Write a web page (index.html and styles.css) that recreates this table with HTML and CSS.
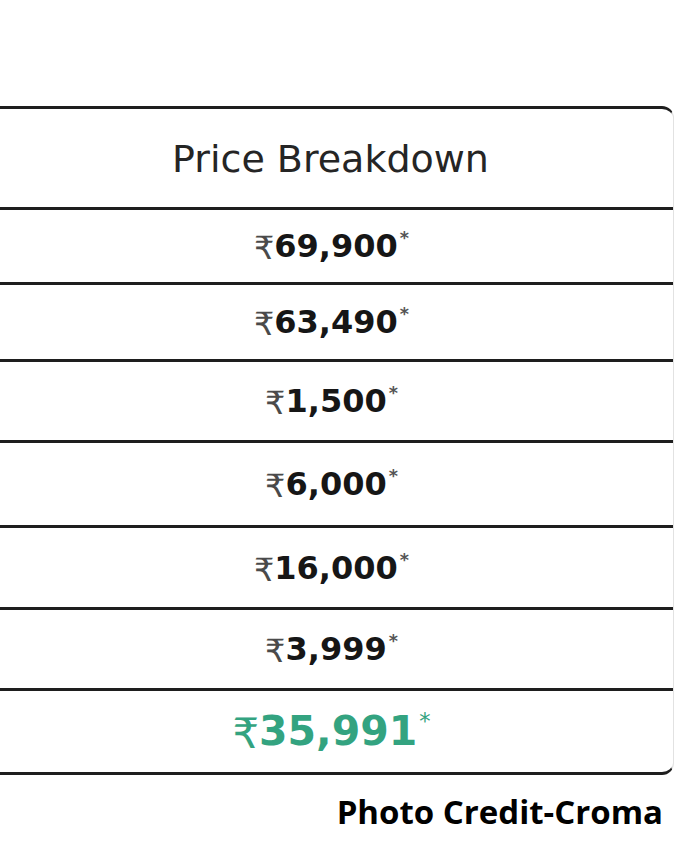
FILE: index.html
```html
<!DOCTYPE html>
<html lang="en">
<head>
<meta charset="utf-8">
<title>Price Breakdown</title>
<link rel="stylesheet" href="styles.css">
</head>
<body>
<div class="page">
  <div class="table">
    <div class="row row-head"><span class="head">Price Breakdown</span></div>
    <div class="row"><span class="val"><span class="rs">₹</span>69,900<span class="ast">*</span></span></div>
    <div class="row"><span class="val"><span class="rs">₹</span>63,490<span class="ast">*</span></span></div>
    <div class="row"><span class="val"><span class="rs">₹</span>1,500<span class="ast">*</span></span></div>
    <div class="row"><span class="val"><span class="rs">₹</span>6,000<span class="ast">*</span></span></div>
    <div class="row"><span class="val"><span class="rs">₹</span>16,000<span class="ast">*</span></span></div>
    <div class="row"><span class="val"><span class="rs">₹</span>3,999<span class="ast">*</span></span></div>
    <div class="row"><span class="val total"><span class="rs">₹</span>35,991<span class="ast">*</span></span></div>
  </div>
  <div class="credit">Photo Credit-Croma</div>
</div>
</body>
</html>
```

FILE: styles.css
```css
* { box-sizing: border-box; }
html, body {
  margin: 0;
  padding: 0;
  background: #ffffff;
}
.page {
  width: 675px;
  height: 850px;
  overflow: hidden;
  padding-top: 106px;
}
.table {
  margin-left: -30px;
  width: 704px;
  border-top: 3px solid #1e1e1e;
  border-bottom: 3px solid #1e1e1e;
  border-right: 1px solid #e2e2e2;
  border-radius: 0 12px 12px 0;
  display: grid;
  grid-template-rows: 98px 75px 77px 81px 85px 82px 81px 84px;
}
.row {
  display: flex;
  align-items: center;
  justify-content: center;
  padding-left: 30px;
  border-top: 3px solid #1e1e1e;
}
.row-head {
  border-top: none;
}
.head {
  font-family: "DejaVu Sans", sans-serif;
  font-size: 38px;
  color: #252525;
  margin-left: -12px;
  margin-top: 2px;
}
.val {
  font-family: "DejaVu Sans", "Noto Sans", sans-serif;
  font-weight: bold;
  font-size: 32px;
  color: #161616;
  display: inline-flex;
  align-items: flex-start;
  margin-left: -10px;
  margin-top: 2px;
}
.rs {
  font-weight: normal;
  color: #4a4a4a;
  font-size: 1em;
  margin-right: 0;
  margin-top: 2px;
}
.ast {
  font-size: 0.55em;
  color: #555555;
  margin-left: 2px;
  margin-top: 1px;
}
.total {
  font-size: 41px;
  color: #33a380;
  margin-left: -10px;
}
.total .rs {
  color: #33a380;
  font-size: 1.02em;
}
.total .ast {
  color: #33a380;
  font-weight: normal;
}
.credit {
  display: flex;
  justify-content: flex-end;
  padding-right: 12px;
  margin-top: 14px;
  font-family: "Open Sans", sans-serif;
  font-weight: bold;
  font-size: 33px;
  color: #000000;
}
```
